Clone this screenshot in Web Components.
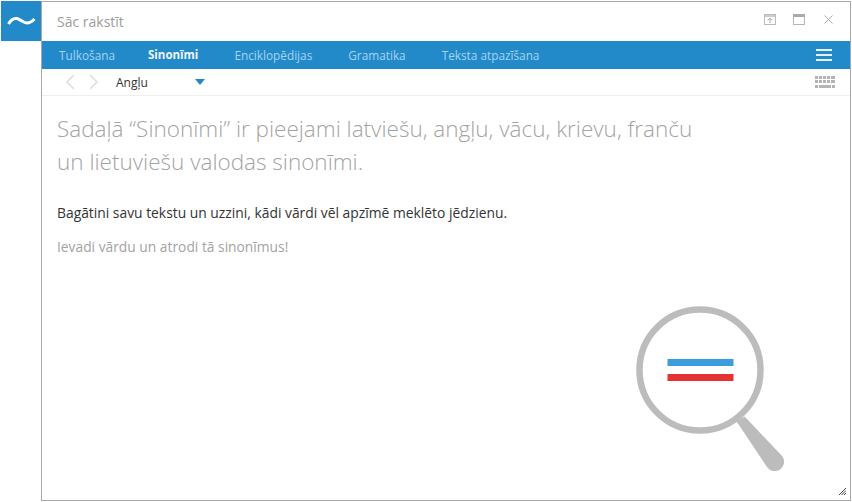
<!DOCTYPE html>
<html lang="lv">
<head>
<meta charset="utf-8">
<title>Sinonīmi</title>
<style>
  html, body { margin: 0; height: 100%; background: #fff; }
  body { font-family: "Open Sans", "Noto Sans", sans-serif; overflow: hidden; }
</style>
</head>
<body>
<app-shell>
  <app-titlebar slot="window">Sāc rakstīt</app-titlebar>
  <app-nav slot="window">
    <nav-tab>Tulkošana</nav-tab>
    <nav-tab active>Sinonīmi</nav-tab>
    <nav-tab>Enciklopēdijas</nav-tab>
    <nav-tab>Gramatika</nav-tab>
    <nav-tab>Teksta atpazīšana</nav-tab>
  </app-nav>
  <app-toolbar slot="window">Angļu</app-toolbar>
  <app-content slot="window">
    <h1 slot="title">Sadaļā “Sinonīmi” ir pieejami latviešu, angļu, vācu, krievu, franču<br>un lietuviešu valodas sinonīmi.</h1>
    <p slot="lead">Bagātini savu tekstu un uzzini, kādi vārdi vēl apzīmē meklēto jēdzienu.</p>
    <p slot="hint">Ievadi vārdu un atrodi tā sinonīmus!</p>
  </app-content>
</app-shell>

<script>
class AppShell extends HTMLElement {
    connectedCallback() {
        const shadow = this.attachShadow({mode: 'open'})
        shadow.innerHTML = `
            <style>
                :host {
                    display: flex;
                    box-sizing: border-box;
                    width: 852px;
                    height: 502px;
                    padding: 1px;
                }
                .logo {
                    flex: none;
                    width: 40px;
                    height: 40px;
                    background: #238aca;
                    display: flex;
                    align-items: center;
                    justify-content: center;
                }
                .window {
                    flex: 1;
                    min-width: 0;
                    position: relative;
                    display: flex;
                    flex-direction: column;
                    border: 1px solid #a9a9a9;
                }
                .grip {
                    position: absolute;
                    right: 4px;
                    bottom: 5px;
                }
            </style>
            <div class="logo">
                <svg width="30" height="12" viewBox="0 0 30 12">
                    <path d="M2.500 9C5 4.500 8 3 11 3.500 15 4.500 17 8 21 8 24 8 26 6.500 28.500 4" fill="none" stroke="#fff" stroke-width="3"/>
                </svg>
            </div>
            <div class="window">
                <slot name="window"></slot>
                <svg class="grip" width="7" height="7" viewBox="0 0 7 7">
                    <path d="M0 7L7 0M2.500 7L7 2.500M5 7L7 5" stroke="#444" stroke-width="1" fill="none"/>
                </svg>
            </div>
        `
    }
}

class AppTitlebar extends HTMLElement {
    connectedCallback() {
        const shadow = this.attachShadow({mode: 'open'})
        shadow.innerHTML = `
            <style>
                :host {
                    display: flex;
                    flex: none;
                    align-items: center;
                    height: 39px;
                    padding: 0 17px 0 15px;
                    color: #9c9c9c;
                    font-size: 14px;
                }
                .title { flex: 1; }
                .btns { display: flex; align-items: center; gap: 17px; margin-top: -4px; }
                svg { display: block; }
            </style>
            <span class="title"><slot></slot></span>
            <div class="btns">
                <svg width="12" height="11" viewBox="0 0 12 11" fill="none">
                    <rect x=".5" y=".5" width="11" height="10" stroke="#bbb"/>
                    <rect x="1" y="1" width="10" height="2" fill="#ccc"/>
                    <path d="M6 9V4.500M3.800 6.500L6 4.200l2.200 2.300" stroke="#aaa"/>
                </svg>
                <svg width="12" height="11" viewBox="0 0 12 11" fill="none">
                    <rect x=".5" y=".5" width="11" height="10" stroke="#b5b5b5"/>
                    <rect x="0" y="0" width="12" height="3" fill="#aaa"/>
                </svg>
                <svg width="9" height="9" viewBox="0 0 9 9" fill="none" style="margin-left:2px">
                    <path d="M.5 .5l8 8M8.500 .5l-8 8" stroke="#aaa"/>
                </svg>
            </div>
        `
    }
}

class AppNav extends HTMLElement {
    connectedCallback() {
        const shadow = this.attachShadow({mode: 'open'})
        shadow.innerHTML = `
            <style>
                :host {
                    display: flex;
                    flex: none;
                    align-items: center;
                    height: 28px;
                    padding: 0 17px 0 17px;
                    background: #238aca;
                }
                .tabs { flex: 1; display: flex; gap: 36px; }
                .menu { width: 16px; height: 12px; margin-right: 1px; display: flex; flex-direction: column; justify-content: space-between; }
                .menu i { height: 2px; background: #e4f1f9; }
            </style>
            <div class="tabs"><slot></slot></div>
            <div class="menu"><i></i><i></i><i></i></div>
        `
    }
}

class NavTab extends HTMLElement {
    connectedCallback() {
        const shadow = this.attachShadow({mode: 'open'})
        shadow.innerHTML = `
            <style>
                :host {
                    display: block;
                    font-size: 11.8px;
                    color: #a5d3f0;
                }
                :host([active]) {
                    margin-left: -3px;
                    color: #eef6fb;
                    font-weight: 700;
                    font-size: 11.500px;
                }
            </style>
            <slot></slot>
        `
    }
}

class AppToolbar extends HTMLElement {
    connectedCallback() {
        const shadow = this.attachShadow({mode: 'open'})
        shadow.innerHTML = `
            <style>
                :host {
                    display: flex;
                    flex: none;
                    align-items: center;
                    box-sizing: border-box;
                    height: 27px;
                    padding: 0 15px 0 23px;
                    border-bottom: 1px solid #efefef;
                    color: #333;
                    font-size: 12px;
                }
                .arrows { display: flex; gap: 14px; margin-right: 17px; }
                .lang { width: 79px; }
                .caret {
                    width: 0;
                    height: 0;
                    border: 5.500px solid transparent;
                    border-top: 6px solid #238aca;
                    border-bottom: 0;
                    margin-right: auto;
                    margin-top: -1px;
                }
                svg { display: block; }
            </style>
            <div class="arrows">
                <svg width="10" height="16" viewBox="0 0 10 16" fill="none"><path d="M9 1L2 8l7 7" stroke="#ddd" stroke-width="1.500"/></svg>
                <svg width="10" height="16" viewBox="0 0 10 16" fill="none"><path d="M1 1l7 7-7 7" stroke="#ddd" stroke-width="1.500"/></svg>
            </div>
            <span class="lang"><slot></slot></span>
            <span class="caret"></span>
            <svg width="20" height="12" viewBox="0 0 20 12" fill="#b4b4b4">
                <path d="M0 0h3v3H0zM4 0h3v3H4zM8 0h3v3H8zM12 0h3v3h-3zM16 0h4v3h-4zM0 4h3v3H0zM4 4h3v3H4zM8 4h3v3H8zM12 4h3v3h-3zM16 4h4v3h-4zM0 9h3v3H0zM4 9h12v3H4zM17 9h3v3h-3z"/>
            </svg>
        `
    }
}

class AppContent extends HTMLElement {
    connectedCallback() {
        const shadow = this.attachShadow({mode: 'open'})
        shadow.innerHTML = `
            <style>
                :host {
                    display: flex;
                    flex: 1;
                    flex-direction: column;
                    min-height: 0;
                    padding: 16px 15px 0;
                }
                ::slotted(h1) {
                    margin: 0 0 25px;
                    font-size: 22.500px;
                    font-weight: 300;
                    line-height: 33px;
                    color: #a3a3a3;
                }
                ::slotted([slot="lead"]) {
                    margin: 0 0 15px;
                    font-size: 13.850px;
                    line-height: 19px;
                    color: #333;
                }
                ::slotted([slot="hint"]) {
                    margin: 0;
                    font-size: 13.800px;
                    line-height: 19px;
                    color: #a3a3a3;
                }
                .art {
                    margin-top: 50px;
                    margin-left: 579px;
                    display: block;
                }
            </style>
            <slot name="title"></slot>
            <slot name="lead"></slot>
            <slot name="hint"></slot>
            <svg class="art" width="152" height="170" viewBox="0 0 152 170" fill="none">
                <circle cx="64" cy="64" r="60.500" stroke="#bcbcbc" stroke-width="6.500"/>
                <rect x="31.500" y="53" width="66" height="7" fill="#3b9edc"/>
                <rect x="31.500" y="68" width="66" height="7" fill="#e53232"/>
                <path d="M100.500 115.500L108.500 110.500L112 114L146.500 150.500A9 9 0 0 1 131 161L104 120.500Z" fill="#bcbcbc"/>
            </svg>
        `
    }
}

customElements.define('app-shell', AppShell);
customElements.define('app-titlebar', AppTitlebar);
customElements.define('app-nav', AppNav);
customElements.define('nav-tab', NavTab);
customElements.define('app-toolbar', AppToolbar);
customElements.define('app-content', AppContent);
</script>
</body>
</html>
